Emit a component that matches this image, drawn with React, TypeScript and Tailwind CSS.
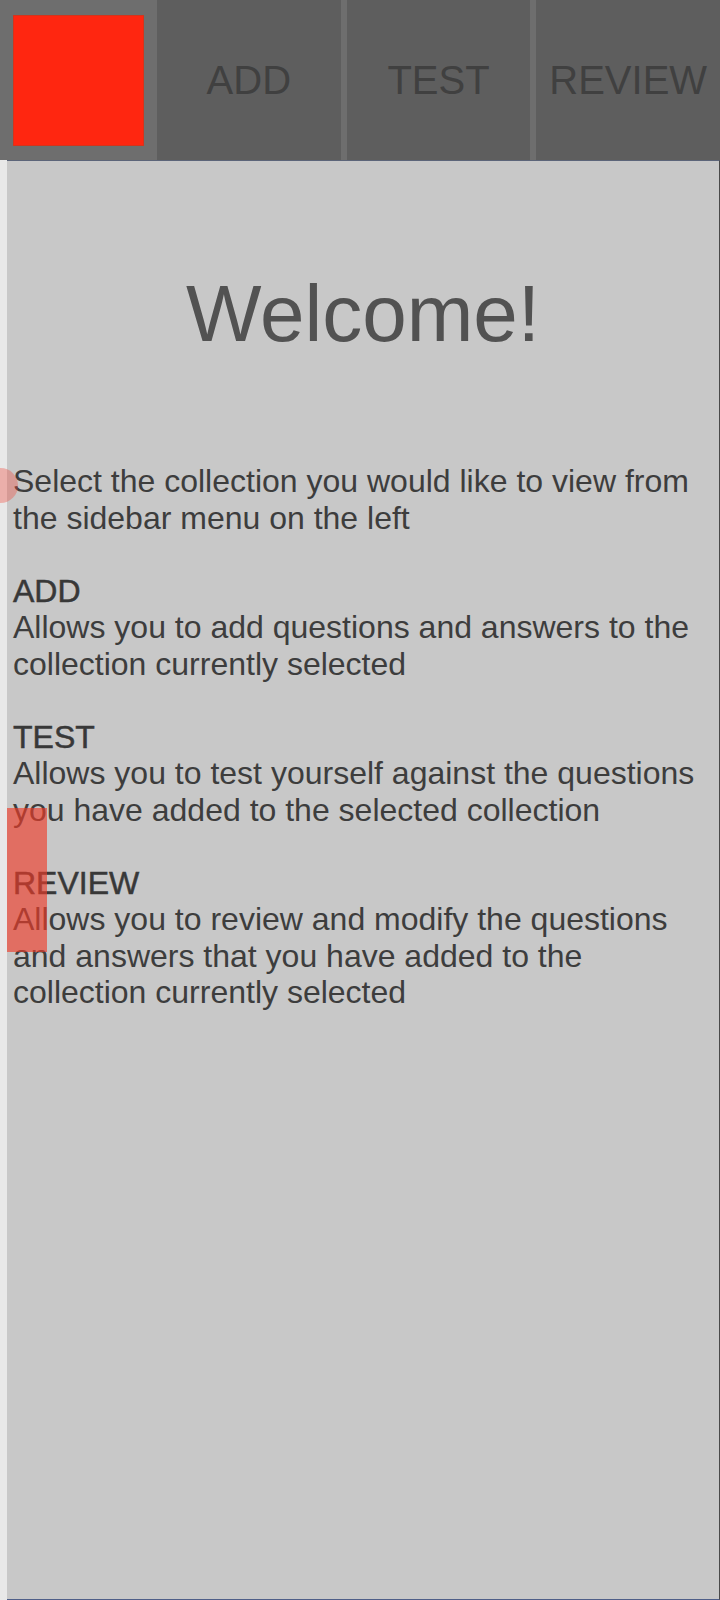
const tabs = ['ADD', 'TEST', 'REVIEW'];

const sections = [
  {
    title: 'ADD',
    text: 'Allows you to add questions and answers to the collection currently selected',
  },
  {
    title: 'TEST',
    text: 'Allows you to test yourself against the questions you have added to the selected collection',
  },
  {
    title: 'REVIEW',
    text: 'Allows you to review and modify the questions and answers that you have added to the collection currently selected',
  },
];

const App = () => {
  return (
    <div
      className="relative flex h-[1600px] w-[720px] flex-col overflow-hidden bg-[#e8e8e8]"
      style={{ fontFamily: '"Liberation Sans", Arial, sans-serif' }}
    >
      {/* top bar */}
      <header className="flex h-[160px] shrink-0 bg-[#6e6e6e]">
        <div className="flex w-[157px] shrink-0 items-center justify-center">
          <div className="h-[131px] w-[131px] border border-[#d4341c] bg-[#ff2610]" />
        </div>
        <nav className="flex flex-1 gap-[6px]">
          {tabs.map((tab) => (
            <button
              key={tab}
              className="flex flex-1 items-center justify-center bg-[#5e5e5e] text-[40px] text-[#404040]"
            >
              {tab}
            </button>
          ))}
        </nav>
      </header>

      {/* main panel */}
      <main className="ml-[7px] flex-1 border-t border-r border-b border-t-[#5c6579] border-r-[#4a4a4a] border-b-[#4f5f88] bg-[#c8c8c8] px-[6px] pt-[107px]">
        <h1 className="text-center text-[80px] leading-[normal] text-[#525252]">Welcome!</h1>

        <div className="mt-[103px] text-[32px] leading-[36.5px] text-[#3d3d3d]">
          <p>Select the collection you would like to view from the sidebar menu on the left</p>
          {sections.map((s) => (
            <div key={s.title} className="mt-[36.5px]">
              <h2 className="text-[#383838] [-webkit-text-stroke:0.5px_#383838]">{s.title}</h2>
              <p>{s.text}</p>
            </div>
          ))}
        </div>
      </main>

      {/* sidebar handle overlays */}
      <div className="absolute left-[-17px] top-[468px] h-[35px] w-[35px] rounded-full bg-[rgba(240,70,55,0.35)]" />
      <div className="absolute left-[7px] top-[808px] h-[144px] w-[40px] bg-[rgba(240,59,41,0.64)]" />
    </div>
  );
};

export default App;
